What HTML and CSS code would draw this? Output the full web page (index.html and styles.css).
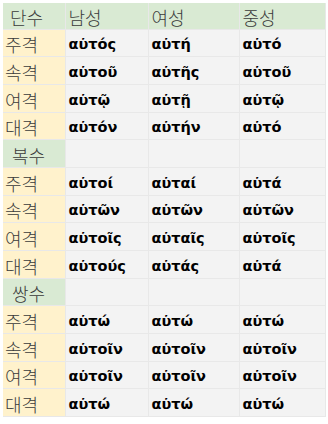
FILE: index.html
```html
<!DOCTYPE html>
<html lang="ko">
<head>
<meta charset="utf-8">
<link rel="stylesheet" href="styles.css">
</head>
<body>
<table class="grid">
  <colgroup>
    <col class="c0"><col class="c1"><col class="c2"><col class="c3">
  </colgroup>
  <tr class="head">
    <td class="lab num">단수</td><td class="hd">남성</td><td class="hd">여성</td><td class="hd">중성</td>
  </tr>
  <tr><td class="lab case">주격</td><td class="gr">αὐτός</td><td class="gr">αὐτή</td><td class="gr">αὐτό</td></tr>
  <tr><td class="lab case">속격</td><td class="gr">αὐτοῦ</td><td class="gr">αὐτῆς</td><td class="gr">αὐτοῦ</td></tr>
  <tr><td class="lab case">여격</td><td class="gr">αὐτῷ</td><td class="gr">αὐτῇ</td><td class="gr">αὐτῷ</td></tr>
  <tr><td class="lab case">대격</td><td class="gr">αὐτόν</td><td class="gr">αὐτήν</td><td class="gr">αὐτό</td></tr>
  <tr><td class="lab num sub">복수</td><td class="gr"></td><td class="gr"></td><td class="gr"></td></tr>
  <tr><td class="lab case">주격</td><td class="gr">αὐτοί</td><td class="gr">αὐταί</td><td class="gr">αὐτά</td></tr>
  <tr><td class="lab case">속격</td><td class="gr">αὐτῶν</td><td class="gr">αὐτῶν</td><td class="gr">αὐτῶν</td></tr>
  <tr><td class="lab case">여격</td><td class="gr">αὐτοῖς</td><td class="gr">αὐταῖς</td><td class="gr">αὐτοῖς</td></tr>
  <tr><td class="lab case">대격</td><td class="gr">αὐτούς</td><td class="gr">αὐτάς</td><td class="gr">αὐτά</td></tr>
  <tr><td class="lab num sub">쌍수</td><td class="gr"></td><td class="gr"></td><td class="gr"></td></tr>
  <tr><td class="lab case">주격</td><td class="gr">αὐτώ</td><td class="gr">αὐτώ</td><td class="gr">αὐτώ</td></tr>
  <tr><td class="lab case">속격</td><td class="gr">αὐτοῖν</td><td class="gr">αὐτοῖν</td><td class="gr">αὐτοῖν</td></tr>
  <tr><td class="lab case">여격</td><td class="gr">αὐτοῖν</td><td class="gr">αὐτοῖν</td><td class="gr">αὐτοῖν</td></tr>
  <tr><td class="lab case">대격</td><td class="gr">αὐτώ</td><td class="gr">αὐτώ</td><td class="gr">αὐτώ</td></tr>
</table>
</body>
</html>
```

FILE: styles.css
```css
html, body {
  margin: 0;
  padding: 0;
  background: #ffffff;
}
body {
  padding: 3px 0 0 3px;
}
.grid {
  border-collapse: collapse;
  table-layout: fixed;
  width: 322px;
}
.c0 { width: 62px; }
.c1 { width: 83px; }
.c2 { width: 91px; }
.c3 { width: 86px; }
.grid td {
  border: 1px solid #e8e8e8;
  height: 27.7px;
  padding: 0 0 3px 3px;
  vertical-align: bottom;
  box-sizing: border-box;
  white-space: nowrap;
  overflow: hidden;
}
.grid tr.head td {
  height: 26px;
  border-top: none;
}
.grid td:first-child { border-left: none; }
.grid .lab, .grid .hd {
  font-family: "Noto Sans CJK KR", sans-serif;
  font-weight: 300;
  font-size: 18px;
  line-height: 22px;
  color: #3a3a3a;
  padding-bottom: 1px;
}
.grid .lab { padding-left: 2px; }
.grid .num { background: #d9ead3; padding-left: 7px; }
.grid .sub { padding-left: 9px; }
.grid .hd { background: #d9ead3; }
.grid .case { background: #fff2cc; }
.grid .gr {
  background: #f3f3f3;
  font-family: "DejaVu Sans", sans-serif;
  font-weight: bold;
  font-size: 14.5px;
  line-height: 18px;
  color: #000000;
  padding-bottom: 3px;
}
```
